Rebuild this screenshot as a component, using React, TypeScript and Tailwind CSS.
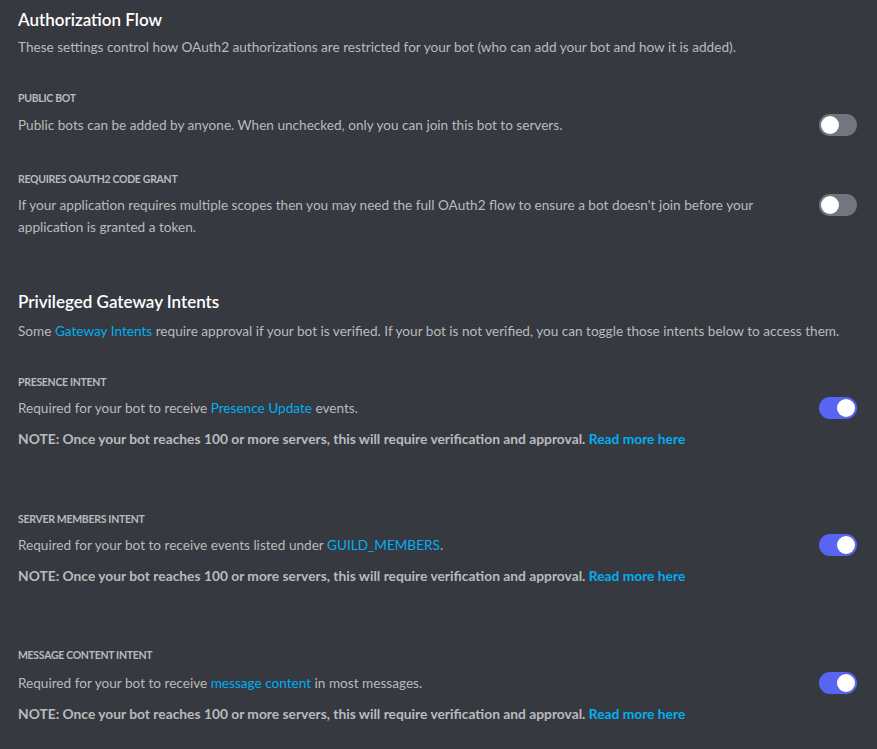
import React from "react";

const font = { fontFamily: "Lato, 'Noto Sans', sans-serif" };

function Toggle({ on }: { on?: boolean }) {
  return (
    <div
      className={`relative shrink-0 w-[38px] h-[22px] rounded-full ${
        on ? "bg-[#5865f2]" : "bg-[#72767d]"
      }`}
    >
      <span
        className={`absolute top-[2px] w-[18px] h-[18px] rounded-full bg-white ${
          on ? "right-[2px]" : "left-[2px]"
        }`}
      />
    </div>
  );
}

function Link({ children, bold }: { children: React.ReactNode; bold?: boolean }) {
  return (
    <a className={`text-[#00aff4] ${bold ? "font-bold" : ""}`} href="#">
      {children}
    </a>
  );
}

function Label({ children }: { children: React.ReactNode }) {
  return (
    <h5 className="text-[10.5px] leading-4 font-bold uppercase tracking-[-0.3px] text-[#b9bbbe]">
      {children}
    </h5>
  );
}

function SettingRow({
  label,
  on,
  children,
  note,
  labelMt,
  descMt = "mt-2",
}: {
  label: string;
  on?: boolean;
  children: React.ReactNode;
  note?: boolean;
  labelMt: string;
  descMt?: string;
}) {
  return (
    <div className={labelMt}>
      <Label>{label}</Label>
      <div className={`flex items-start justify-between gap-10 ${descMt}`}>
        <p className="flex-1 text-[13.6px] leading-[22px] text-[#b9bbbe]">{children}</p>
        <Toggle on={on} />
      </div>
      {note && (
        <p className="mt-[9px] text-[13.8px] leading-[22px] font-bold text-[#b9bbbe]">
          NOTE: Once your bot reaches 100 or more servers, this will require verification and
          approval. <Link bold>Read more here</Link>
        </p>
      )}
    </div>
  );
}

export default function App() {
  return (
    <div className="min-h-screen bg-[#36393f] pl-[18px] pr-[20px] pt-2 pb-6" style={font}>
      <section>
        <h2 className="text-[17px] leading-6 font-semibold text-white">Authorization Flow</h2>
        <p className="mt-[5px] text-[13.6px] leading-5 text-[#b9bbbe]">
          These settings control how OAuth2 authorizations are restricted for your bot (who can add
          your bot and how it is added).
        </p>
        <SettingRow label="Public Bot" labelMt="mt-[33px]">
          Public bots can be added by anyone. When unchecked, only you can join this bot to servers.
        </SettingRow>
        <SettingRow label="Requires OAuth2 Code Grant" labelMt="mt-[35px]" descMt="mt-[7px]">
          If your application requires multiple scopes then you may need the full OAuth2 flow to
          ensure a bot doesn't join before your application is granted a token.
        </SettingRow>
      </section>

      <section className="mt-[52px]">
        <h2 className="text-[17px] leading-6 font-semibold text-white">
          Privileged Gateway Intents
        </h2>
        <p className="mt-[6px] text-[13.6px] leading-[22px] text-[#b9bbbe]">
          Some <Link>Gateway Intents</Link> require approval if your bot is verified. If your bot is
          not verified, you can toggle those intents below to access them.
        </p>
        <SettingRow label="Presence Intent" on note labelMt="mt-[32px]" descMt="mt-[7px]">
          Required for your bot to receive <Link>Presence Update</Link> events.
        </SettingRow>
        <SettingRow label="Server Members Intent" on note labelMt="mt-[61px]" descMt="mt-[7px]">
          Required for your bot to receive events listed under <Link>GUILD_MEMBERS</Link>.
        </SettingRow>
        <SettingRow label="Message Content Intent" on note labelMt="mt-[60px]" descMt="mt-[9px]">
          Required for your bot to receive <Link>message content</Link> in most messages.
        </SettingRow>
      </section>
    </div>
  );
}
